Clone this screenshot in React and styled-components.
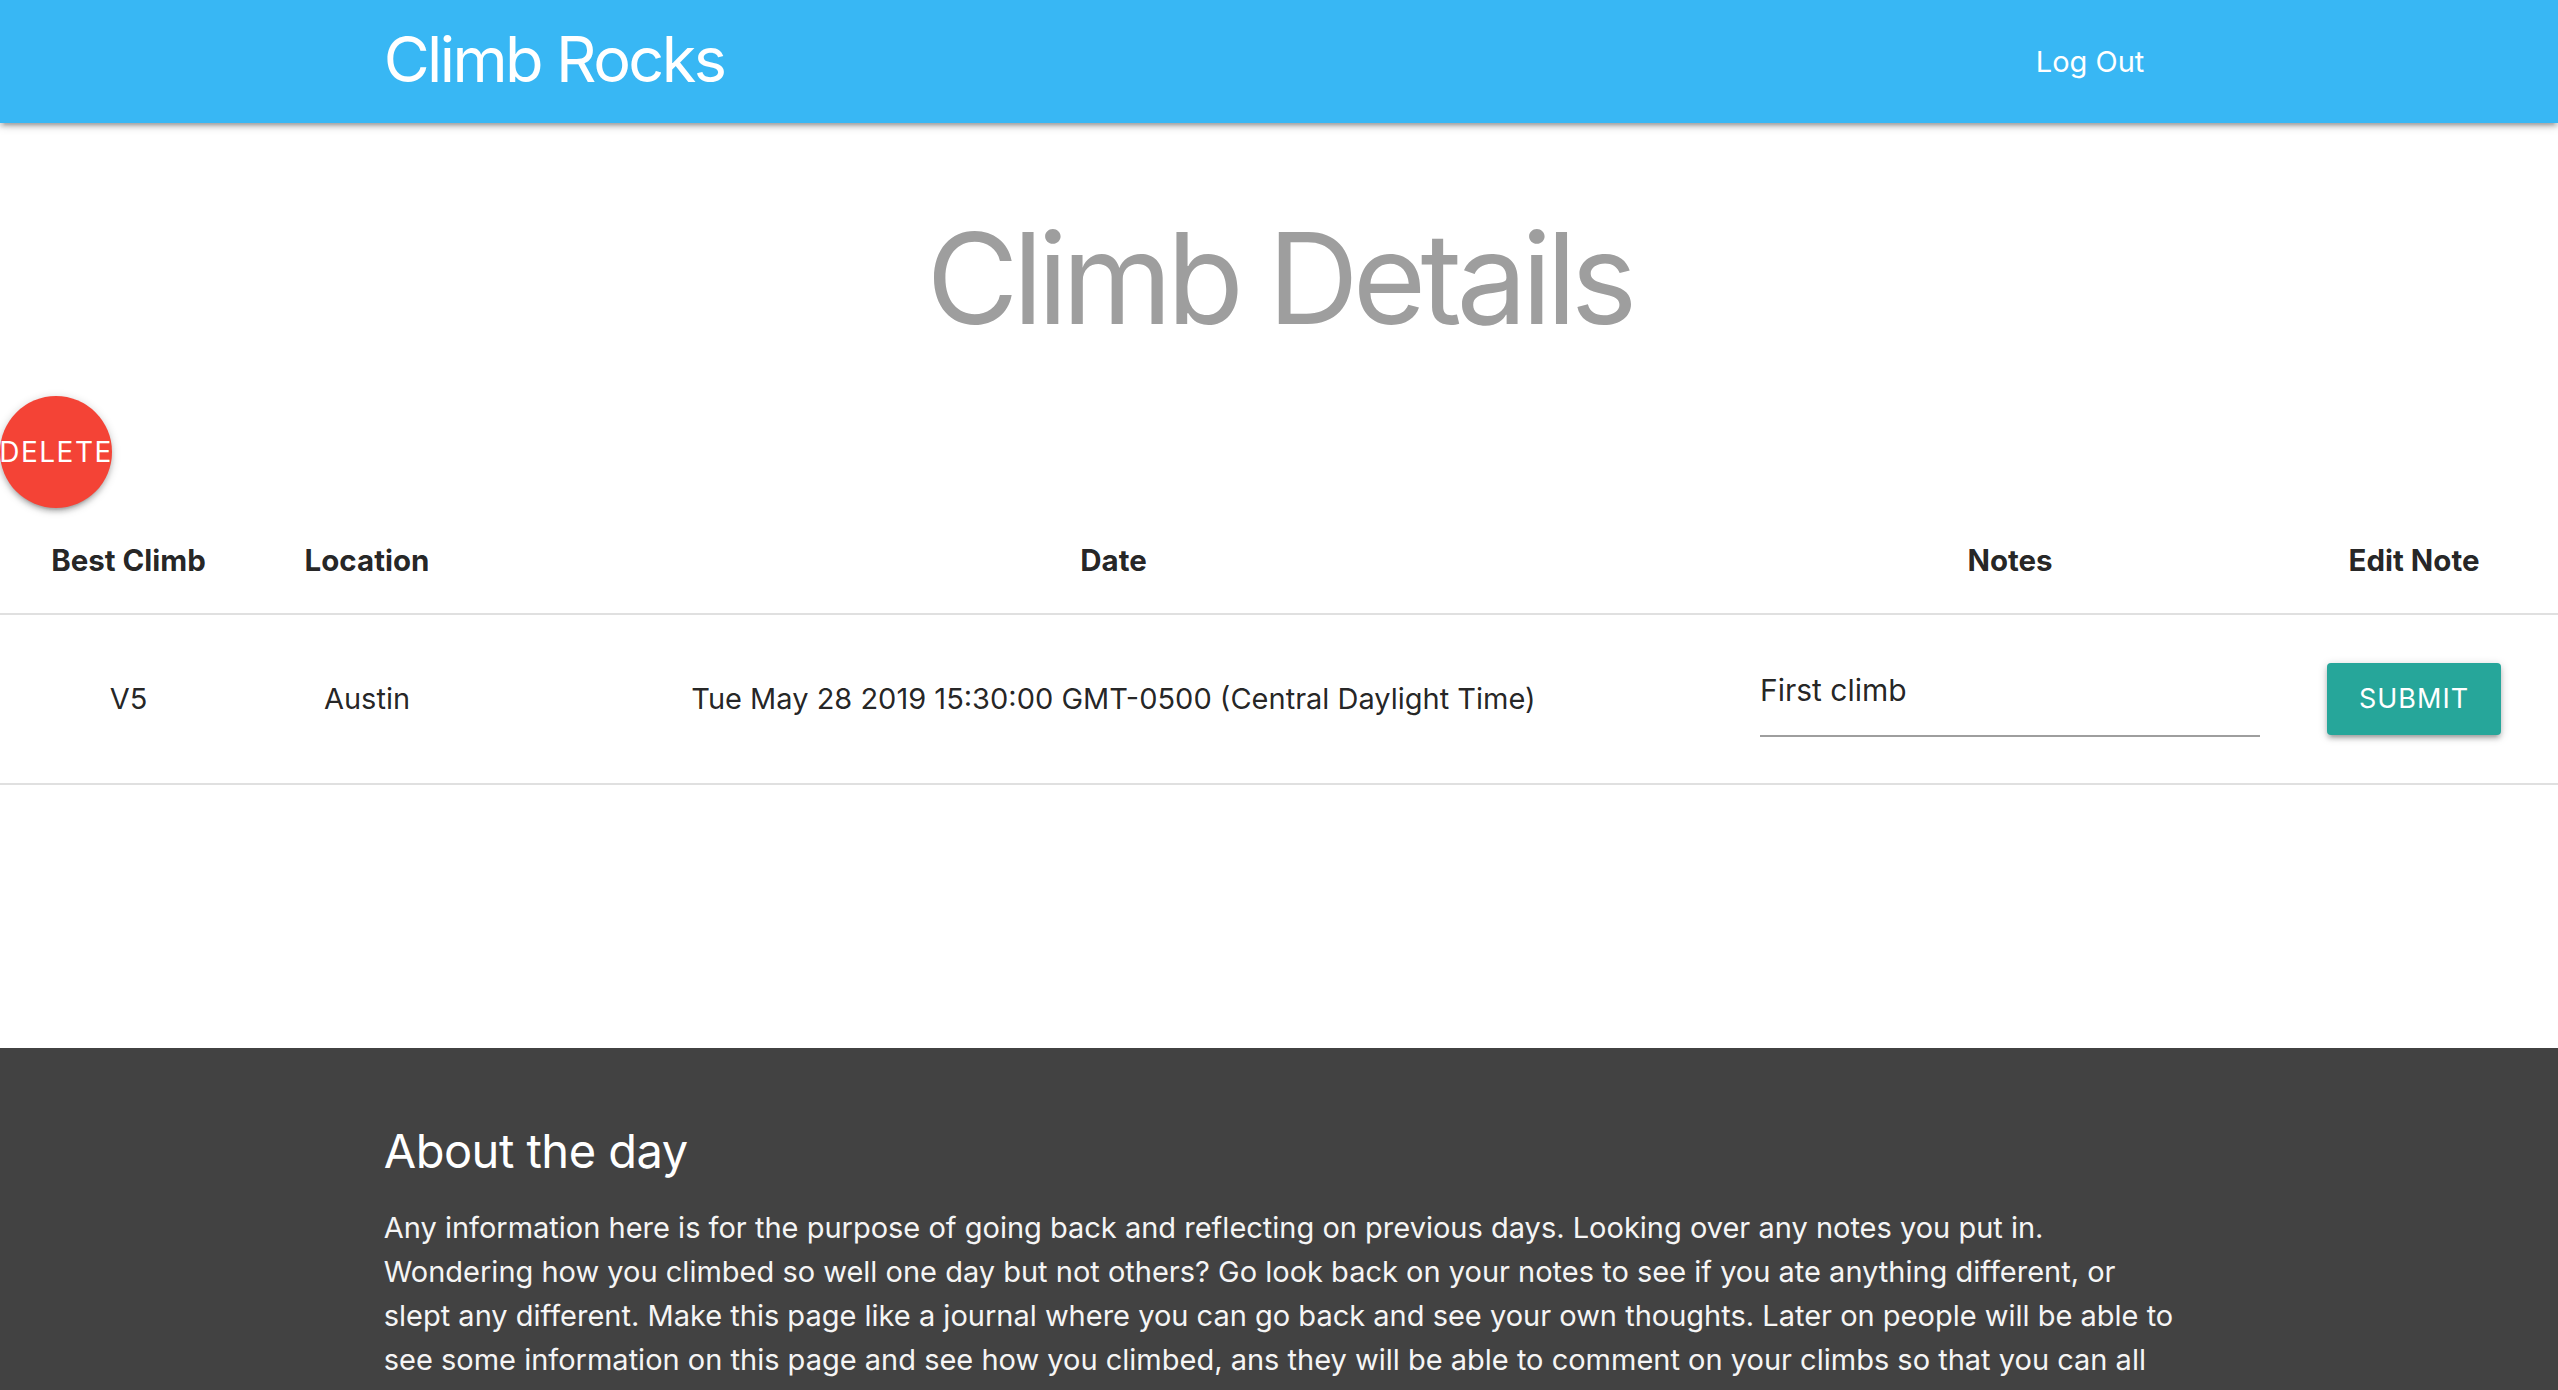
import React, { useState } from 'react'
import styled, { createGlobalStyle } from 'styled-components'

const climb = {
  grade: 'V5',
  location: 'Austin',
  date: 'Tue May 28 2019 15:30:00 GMT-0500 (Central Daylight Time)',
  notes: 'First climb',
}

export default function App() {
  const [notes, setNotes] = useState(climb.notes)

  return (
    <>
      <GlobalStyle />
      <Nav>
        <NavWrapper>
          <Brand>Climb Rocks</Brand>
          <NavLink href="#">Log Out</NavLink>
        </NavWrapper>
      </Nav>

      <Main>
        <Title>Climb Details</Title>
        <DeleteButton>DELETE</DeleteButton>

        <Table>
          <colgroup>
            <Col $w={257} />
            <Col $w={220} />
            <Col $w={1273} />
            <Col $w={520} />
            <col />
          </colgroup>
          <thead>
            <Row>
              <Th>Best Climb</Th>
              <Th>Location</Th>
              <Th>Date</Th>
              <Th>Notes</Th>
              <Th>Edit Note</Th>
            </Row>
          </thead>
          <tbody>
            <Row>
              <Td>{climb.grade}</Td>
              <Td>{climb.location}</Td>
              <Td>{climb.date}</Td>
              <Td>
                <NoteInput value={notes} onChange={e => setNotes(e.target.value)} />
              </Td>
              <Td>
                <SubmitButton>Submit</SubmitButton>
              </Td>
            </Row>
          </tbody>
        </Table>
      </Main>

      <Footer>
        <FooterContainer>
          <FooterTitle>About the day</FooterTitle>
          <FooterText>
            Any information here is for the purpose of going back and reflecting on previous days. Looking over any notes you put in.
            Wondering how you climbed so well one day but not others? Go look back on your notes to see if you ate anything different, or
            slept any different. Make this page like a journal where you can go back and see your own thoughts. Later on people will be able to
            see some information on this page and see how you climbed, ans they will be able to comment on your climbs so that you can all
          </FooterText>
        </FooterContainer>
      </Footer>
    </>
  )
}

const GlobalStyle = createGlobalStyle`
  body {
    margin: 0;
    font-family: Inter, "Noto Sans", sans-serif;
    color: rgba(0, 0, 0, 0.87);
    background: #fff;
  }
`

const Nav = styled.nav`
  height: 123px;
  background-color: #38b7f4;
  box-shadow: 0 4px 4px 0 rgba(0,0,0,0.14), 0 6px 2px -4px rgba(0,0,0,0.12), 0 2px 10px 0 rgba(0,0,0,0.2);
  position: relative;
  z-index: 1;
`

const NavWrapper = styled.div`
  width: 70%;
  height: 100%;
  margin: 0 auto;
  display: flex;
  align-items: center;
  justify-content: space-between;
`

const Brand = styled.a`
  color: #fff;
  font-size: 63px;
  margin-bottom: 5px;
  letter-spacing: -2.6px;
`

const NavLink = styled.a`
  color: #fff;
  font-size: 29px;
  padding: 0 30px;
  text-decoration: none;
`

const Main = styled.main`
  padding-bottom: 263px;
`

const Title = styled.h1`
  margin: 86px 0 48px;
  font-size: 126px;
  font-weight: 400;
  line-height: 1.1;
  color: #9e9e9e;
  text-align: center;
  letter-spacing: -5.8px;
`

const DeleteButton = styled.button`
  width: 112px;
  height: 112px;
  border-radius: 50%;
  border: none;
  padding: 0;
  background-color: #f44336;
  color: #fff;
  font-family: Inter, sans-serif;
  font-size: 28px;
  letter-spacing: 1.5px;
  display: flex;
  align-items: center;
  justify-content: center;
  overflow: hidden;
  box-shadow: 0 4px 4px 0 rgba(0,0,0,0.14), 0 6px 2px -4px rgba(0,0,0,0.12), 0 2px 10px 0 rgba(0,0,0,0.2);
`

const Table = styled.table`
  width: 100%;
  border-collapse: collapse;
  table-layout: fixed;
`

const Col = styled.col`
  width: ${p => p.$w}px;
`

const Row = styled.tr`
  border-bottom: 2px solid rgba(0, 0, 0, 0.12);
`

const Th = styled.th`
  padding: 30px 10px;
  font-size: 29.5px;
  font-weight: 700;
  line-height: 45px;
  text-align: center;
`

const Td = styled.td`
  padding: 30px 10px;
  font-size: 29px;
  line-height: 45px;
  text-align: center;
  vertical-align: middle;
`

const NoteInput = styled.input`
  display: block;
  width: 100%;
  height: 90px;
  margin: 0 0 16px;
  padding: 0;
  border: none;
  border-bottom: 2px solid #9e9e9e;
  outline: none;
  background: transparent;
  font-family: Inter, sans-serif;
  font-size: 30px;
  color: rgba(0, 0, 0, 0.87);
  box-sizing: content-box;
`

const SubmitButton = styled.button`
  height: 72px;
  padding: 0 32px;
  border: none;
  border-radius: 4px;
  background-color: #26a69a;
  color: #fff;
  font-family: Inter, sans-serif;
  font-size: 27px;
  letter-spacing: 1px;
  text-transform: uppercase;
  box-shadow: 0 4px 4px 0 rgba(0,0,0,0.14), 0 6px 2px -4px rgba(0,0,0,0.12), 0 2px 10px 0 rgba(0,0,0,0.2);
`

const Footer = styled.footer`
  background-color: #424242;
  padding: 77px 0 60px;
`

const FooterContainer = styled.div`
  width: 70%;
  margin: 0 auto;
`

const FooterTitle = styled.h5`
  margin: 0 0 30px;
  font-size: 47px;
  font-weight: 400;
  line-height: 1.1;
  color: #fff;
  letter-spacing: -0.5px;
`

const FooterText = styled.p`
  margin: 0;
  font-size: 29px;
  line-height: 44px;
  color: #f5f5f5;
`
